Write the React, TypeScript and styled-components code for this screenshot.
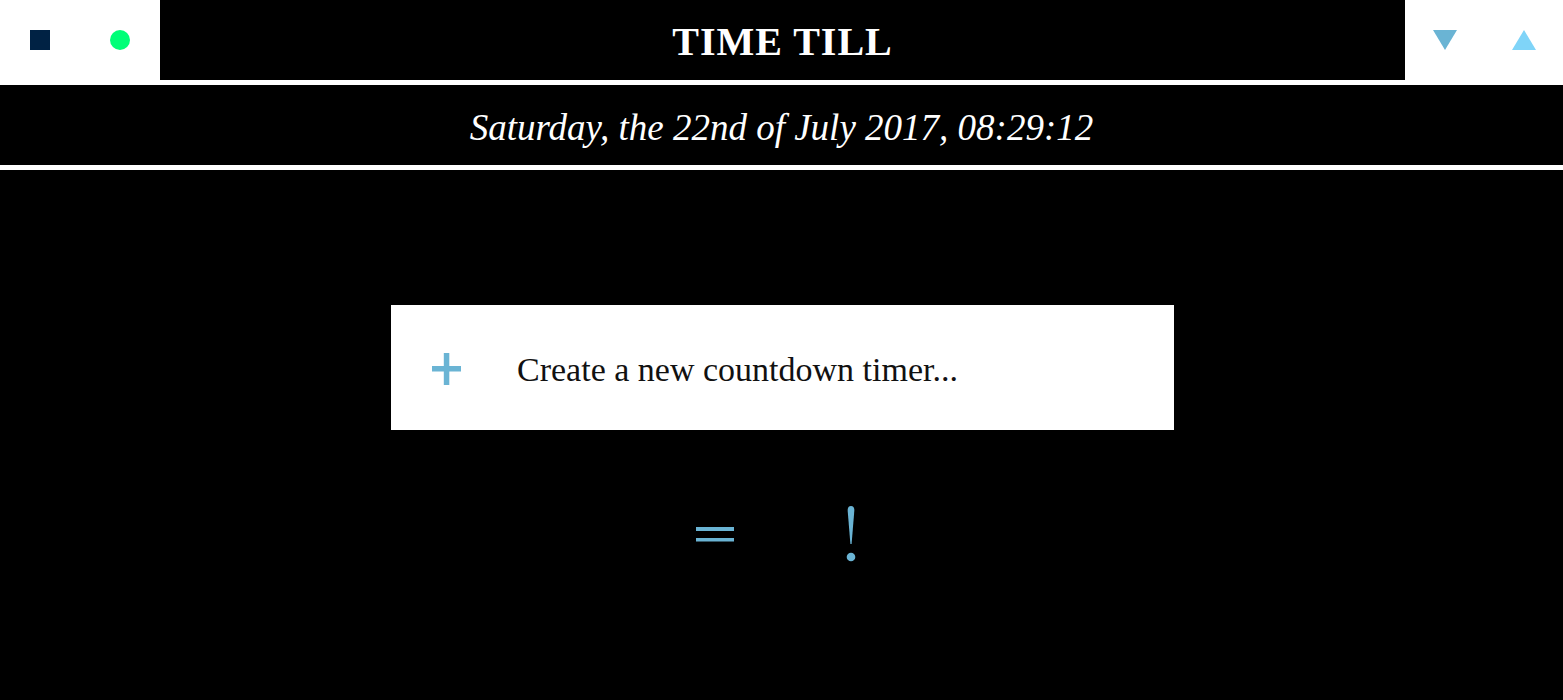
import React from "react";
import styled, { createGlobalStyle } from "styled-components";

const Global = createGlobalStyle`
  html, body { margin: 0; padding: 0; background: #000; }
  body { font-family: "Liberation Serif", "DejaVu Serif", serif; }
`;

const Page = styled.div`
  width: 1563px;
  height: 700px;
  background: #000;
  display: flex;
  flex-direction: column;
  overflow: hidden;
`;

const TopBar = styled.header`
  display: flex;
  height: 80px;
  background: #fff;
`;

const SideBox = styled.div<{ $w: number }>`
  width: ${(p) => p.$w}px;
  flex: none;
  display: flex;
  align-items: center;
  justify-content: space-around;
  background: #fff;
`;

const Square = styled.span`
  width: 20px;
  height: 20px;
  background: #002244;
  display: block;
`;

const Dot = styled.span`
  width: 20px;
  height: 20px;
  border-radius: 50%;
  background: #00ff77;
  display: block;
`;

const Tri = styled.svg`
  width: 24px;
  height: 20px;
  display: block;
`;

const Title = styled.h1`
  flex: 1;
  margin: 0;
  background: #000;
  color: #fff;
  display: flex;
  align-items: center;
  justify-content: center;
  font-family: "Liberation Serif", serif;
  font-weight: 700;
  font-size: 40px;
  letter-spacing: 1px;
  padding-top: 2px;
`;

const DateBar = styled.div`
  height: 90px;
  box-sizing: border-box;
  background: #000;
  border-top: 5px solid #fff;
  border-bottom: 5px solid #fff;
  padding-top: 4px;
  display: flex;
  align-items: center;
  justify-content: center;
  color: #fff;
  font-style: italic;
  font-size: 37px;
`;

const Main = styled.main`
  flex: 1;
  display: flex;
  flex-direction: column;
  align-items: center;
  padding-top: 135px;
`;

const Card = styled.button`
  width: 783px;
  height: 125px;
  margin-left: 2px;
  background: #fff;
  border: none;
  display: flex;
  align-items: center;
  padding: 0 0 0 41px;
  cursor: pointer;
  font-family: inherit;
  text-align: left;
`;

const PlusIcon = styled.svg`
  width: 29px;
  height: 32px;
  display: block;
  margin-right: 56px;
  margin-top: 2px;
`;

const CardText = styled.span`
  font-size: 34px;
  color: #111;
  padding-top: 4px;
`;

const Controls = styled.div`
  margin-top: 76px;
  display: flex;
  align-items: center;
  gap: 112px;
  margin-left: -12px;
`;

const Sym = styled.button`
  background: none;
  border: none;
  padding: 0;
  color: #6ab4d4;
  cursor: pointer;
  display: block;
`;

export default function App() {
  return (
    <>
      <Global />
      <Page>
        <TopBar>
          <SideBox $w={160}>
            <Square />
            <Dot />
          </SideBox>
          <Title>TIME TILL</Title>
          <SideBox $w={158}>
            <Tri viewBox="0 0 24 20">
              <polygon points="0,0 24,0 12,20" fill="#6ab4d4" />
            </Tri>
            <Tri viewBox="0 0 24 20">
              <polygon points="12,0 24,20 0,20" fill="#7fd4f8" />
            </Tri>
          </SideBox>
        </TopBar>
        <DateBar>Saturday, the 22nd of July 2017, 08:29:12</DateBar>
        <Main>
          <Card>
            <PlusIcon viewBox="0 0 29 32">
              <rect x="0" y="13" width="29" height="5.5" fill="#6ab4d4" />
              <rect x="11.8" y="0" width="5.5" height="32" fill="#6ab4d4" />
            </PlusIcon>
            <CardText>Create a new countdown timer...</CardText>
          </Card>
          <Controls>
            <Sym aria-label="list">
              <svg width="38" height="16" viewBox="0 0 38 16">
                <rect x="0" y="1" width="38" height="4" fill="#6ab4d4" />
                <rect x="0" y="12" width="38" height="3.5" fill="#6ab4d4" />
              </svg>
            </Sym>
            <Sym aria-label="alert">
              <svg width="10" height="56" viewBox="0 0 10 56">
                <path d="M5 0 C7.5 0 8.5 2 8.3 5 L5.6 38 L4.4 38 L1.7 5 C1.5 2 2.5 0 5 0 Z" fill="#6ab4d4" />
                <circle cx="5" cy="51" r="4.3" fill="#6ab4d4" />
              </svg>
            </Sym>
          </Controls>
        </Main>
      </Page>
    </>
  );
}
